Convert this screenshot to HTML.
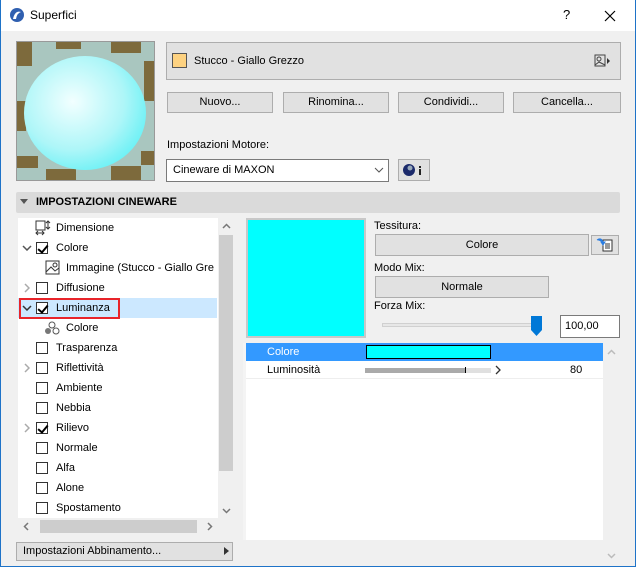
<!DOCTYPE html>
<html><head><meta charset="utf-8"><style>
*{box-sizing:border-box;margin:0;padding:0}
body{width:636px;height:567px;overflow:hidden;background:#f0f0f0;font-family:"Liberation Sans",sans-serif;font-size:11px;color:#000;position:relative}
.a{position:absolute}
.win{left:0;top:0;width:636px;height:567px;border:1px solid #1e73c8;border-top:none}
.title{left:1px;top:0;width:634px;height:31px;background:#fff}
.btn{position:absolute;background:#e1e1e1;border:1px solid #adadad;text-align:center;line-height:18px}
.cb{position:absolute;width:12px;height:12px;border:1px solid #333;background:#fff}
.row{position:absolute;left:0;height:20px;width:199px;line-height:20px}
.chk:after{content:"";position:absolute;left:3px;top:0px;width:4px;height:8px;border:solid #000;border-width:0 2px 2px 0;transform:rotate(40deg)}
</style></head><body>
<div class="a win"></div>
<div class="a title"></div>
<svg class="a" style="left:9px;top:7px" width="16" height="16"><circle cx="8" cy="8" r="7" fill="#2f5fb0"/><path d="M4 12 Q6 3 12 5 Q8 6 7 12Z" fill="#fff"/></svg>
<div class="a" style="left:30px;top:8px;font-size:12px">Superfici</div>
<div class="a" style="left:563px;top:7px;font-size:13px">?</div>
<svg class="a" style="left:604px;top:10px" width="12" height="12"><path d="M1 1L11 11M11 1L1 11" stroke="#000" stroke-width="1.2"/></svg>

<svg class="a" style="left:16px;top:41px" width="139" height="140">
<rect width="139" height="140" fill="#a9c6bf"/>
<g fill="#7d6a3c"><rect x="0" y="0" width="16" height="25"/><rect x="40" y="0" width="25" height="8"/><rect x="95" y="0" width="30" height="12"/><rect x="0" y="60" width="10" height="30"/><rect x="128" y="20" width="11" height="40"/><rect x="0" y="115" width="22" height="12"/><rect x="30" y="128" width="30" height="12"/><rect x="95" y="125" width="30" height="15"/><rect x="125" y="110" width="14" height="14"/></g>
<rect x="0.5" y="0.5" width="138" height="139" fill="none" stroke="#999"/>
<defs><radialGradient id="g" cx="0.4" cy="0.4" r="0.7"><stop offset="0" stop-color="#f2ffff"/><stop offset="0.6" stop-color="#aef6f8"/><stop offset="1" stop-color="#5ef0f5"/></radialGradient></defs>
<ellipse cx="69" cy="72" rx="61" ry="57" fill="url(#g)"/>
</svg>

<div class="btn" style="left:166px;top:42px;width:455px;height:38px;text-align:left"></div>
<div class="a" style="left:172px;top:53px;width:15px;height:15px;background:#fdd281;border:1px solid #555"></div>
<div class="a" style="left:194px;top:55px">Stucco - Giallo Grezzo</div>
<svg class="a" style="left:594px;top:54px" width="16" height="14"><rect x="1" y="1" width="10" height="11" fill="none" stroke="#444"/><circle cx="5" cy="5" r="2" fill="none" stroke="#444"/><path d="M1 11L5 8L11 11" fill="none" stroke="#444"/><path d="M13 4L16 7L13 10Z" fill="#333"/></svg>

<div class="btn" style="left:167px;top:92px;width:106px;height:21px">Nuovo...</div>
<div class="btn" style="left:283px;top:92px;width:106px;height:21px">Rinomina...</div>
<div class="btn" style="left:398px;top:92px;width:106px;height:21px">Condividi...</div>
<div class="btn" style="left:513px;top:92px;width:108px;height:21px">Cancella...</div>

<div class="a" style="left:167px;top:139px">Impostazioni Motore:</div>
<div class="a" style="left:166px;top:159px;width:223px;height:23px;background:#fff;border:1px solid #7a7a7a;line-height:21px;padding-left:6px">Cineware di MAXON</div>
<svg class="a" style="left:374px;top:167px" width="10" height="6"><path d="M1 1L5 5L9 1" fill="none" stroke="#555"/></svg>
<div class="btn" style="left:398px;top:159px;width:32px;height:22px"></div>
<svg class="a" style="left:402px;top:162px" width="24" height="16"><circle cx="7" cy="8" r="6" fill="#1b2a6b"/><circle cx="8" cy="6" r="2.5" fill="#9ab"/><rect x="17" y="7" width="2" height="6" fill="#222"/><rect x="17" y="4" width="2" height="2" fill="#222"/></svg>

<div class="a" style="left:16px;top:192px;width:604px;height:21px;background:#dadada;border-radius:2px"></div>
<svg class="a" style="left:20px;top:199px" width="8" height="6"><path d="M0 0H8L4 5Z" fill="#555"/></svg>
<div class="a" style="left:36px;top:196px;font-weight:bold">IMPOSTAZIONI CINEWARE</div>

<div class="a" style="left:18px;top:218px;width:200px;height:300px;background:#fff"></div>
<div class="a" style="left:218px;top:218px;width:16px;height:300px;background:#f0f0f0"></div>
<div class="a" style="left:219px;top:235px;width:14px;height:236px;background:#cdcdcd"></div>
<svg class="a" style="left:222px;top:223px" width="9" height="6"><path d="M1 5L4.5 1.5L8 5" fill="none" stroke="#777" stroke-width="1.5"/></svg>
<svg class="a" style="left:222px;top:508px" width="9" height="6"><path d="M1 1L4.5 4.5L8 1" fill="none" stroke="#777" stroke-width="1.5"/></svg>
<div class="a" style="left:18px;top:518px;width:216px;height:17px;background:#f0f0f0"></div>
<div class="a" style="left:40px;top:520px;width:157px;height:13px;background:#cdcdcd"></div>
<svg class="a" style="left:23px;top:522px" width="6" height="9"><path d="M5 1L1.5 4.5L5 8" fill="none" stroke="#777" stroke-width="1.5"/></svg>
<svg class="a" style="left:207px;top:522px" width="6" height="9"><path d="M1 1L4.5 4.5L1 8" fill="none" stroke="#777" stroke-width="1.5"/></svg>

<div class="a" style="left:18px;top:218px;width:200px;height:300px;overflow:hidden">
<div class="row" style="top:0"><svg class="a" style="left:17px;top:2px" width="16" height="16"><rect x="1" y="1" width="9" height="9" fill="none" stroke="#333"/><path d="M13 1V9M11 3L13 1L15 3M11 7L13 9L15 7M1 13H9M3 11L1 13L3 15M7 11L9 13L7 15" fill="none" stroke="#333"/></svg><span class="a" style="left:38px">Dimensione</span></div>
<div class="row" style="top:20px"><svg class="a" style="left:4px;top:7px" width="10" height="6"><path d="M1 1L5 5L9 1" fill="none" stroke="#555" stroke-width="1.5"/></svg><div class="cb chk" style="left:18px;top:4px"></div><span class="a" style="left:38px">Colore</span></div>
<div class="row" style="top:40px"><svg class="a" style="left:27px;top:2px" width="16" height="16"><rect x="1" y="1" width="13" height="13" fill="none" stroke="#333"/><path d="M1 12L6 7L10 11L14 8" fill="none" stroke="#333"/><circle cx="10" cy="5" r="2" fill="none" stroke="#333"/></svg><span class="a" style="left:48px;white-space:nowrap">Immagine (Stucco - Giallo Gre</span></div>
<div class="row" style="top:60px"><svg class="a" style="left:6px;top:5px" width="6" height="10"><path d="M1 1L5 5L1 9" fill="none" stroke="#aaa" stroke-width="1.5"/></svg><div class="cb" style="left:18px;top:4px"></div><span class="a" style="left:38px">Diffusione</span></div>
<div class="row" style="top:80px;background:#cce8ff"><svg class="a" style="left:4px;top:7px" width="10" height="6"><path d="M1 1L5 5L9 1" fill="none" stroke="#333" stroke-width="1.5"/></svg><div class="cb chk" style="left:18px;top:4px"></div><span class="a" style="left:38px">Luminanza</span><div class="a" style="left:1px;top:0;width:101px;height:21px;border:2px solid #e8242a"></div></div>
<div class="row" style="top:100px"><svg class="a" style="left:26px;top:2px" width="16" height="16"><circle cx="8" cy="5" r="3" fill="none" stroke="#555"/><circle cx="4" cy="11" r="3" fill="#777"/><circle cx="12" cy="11" r="3" fill="none" stroke="#555"/></svg><span class="a" style="left:48px">Colore</span></div>
<div class="row" style="top:120px"><div class="cb" style="left:18px;top:4px"></div><span class="a" style="left:38px">Trasparenza</span></div>
<div class="row" style="top:140px"><svg class="a" style="left:6px;top:5px" width="6" height="10"><path d="M1 1L5 5L1 9" fill="none" stroke="#aaa" stroke-width="1.5"/></svg><div class="cb" style="left:18px;top:4px"></div><span class="a" style="left:38px">Riflettività</span></div>
<div class="row" style="top:160px"><div class="cb" style="left:18px;top:4px"></div><span class="a" style="left:38px">Ambiente</span></div>
<div class="row" style="top:180px"><div class="cb" style="left:18px;top:4px"></div><span class="a" style="left:38px">Nebbia</span></div>
<div class="row" style="top:200px"><svg class="a" style="left:6px;top:5px" width="6" height="10"><path d="M1 1L5 5L1 9" fill="none" stroke="#aaa" stroke-width="1.5"/></svg><div class="cb chk" style="left:18px;top:4px"></div><span class="a" style="left:38px">Rilievo</span></div>
<div class="row" style="top:220px"><div class="cb" style="left:18px;top:4px"></div><span class="a" style="left:38px">Normale</span></div>
<div class="row" style="top:240px"><div class="cb" style="left:18px;top:4px"></div><span class="a" style="left:38px">Alfa</span></div>
<div class="row" style="top:260px"><div class="cb" style="left:18px;top:4px"></div><span class="a" style="left:38px">Alone</span></div>
<div class="row" style="top:280px"><div class="cb" style="left:18px;top:4px"></div><span class="a" style="left:38px">Spostamento</span></div>
</div>

<div class="btn" style="left:16px;top:542px;width:217px;height:19px;text-align:left;padding-left:6px;line-height:17px">Impostazioni Abbinamento...</div>
<svg class="a" style="left:224px;top:547px" width="5" height="8"><path d="M0 0L5 4L0 8Z" fill="#333"/></svg>

<div class="a" style="left:246px;top:218px;width:120px;height:120px;background:#00ffff;border:2px solid #c8c8c8"></div>
<div class="a" style="left:374px;top:220px">Tessitura:</div>
<div class="btn" style="left:375px;top:234px;width:214px;height:22px;line-height:20px">Colore</div>
<div class="btn" style="left:591px;top:235px;width:28px;height:20px"></div>
<svg class="a" style="left:596px;top:237px" width="18" height="16"><rect x="7" y="3" width="9" height="11" fill="#fff" stroke="#333"/><path d="M9 7H14M9 9H14M9 11H14" stroke="#333"/><path d="M1 3Q5 0 7 5L5 5L7 8L9 5L7 5" fill="#2a7de1" stroke="#2a7de1"/></svg>
<div class="a" style="left:374px;top:262px">Modo Mix:</div>
<div class="btn" style="left:375px;top:276px;width:174px;height:22px;line-height:20px">Normale</div>
<div class="a" style="left:374px;top:300px">Forza Mix:</div>
<div class="a" style="left:382px;top:323px;width:152px;height:4px;background:#e7e7e7;border:1px solid #d0d0d0"></div>
<svg class="a" style="left:531px;top:316px" width="11" height="20"><path d="M0 0H11V14L5.5 20L0 14Z" fill="#0078d7"/></svg>
<div class="a" style="left:560px;top:315px;width:60px;height:23px;background:#fff;border:1px solid #7a7a7a;line-height:21px;padding-left:4px">100,00</div>

<div class="a" style="left:246px;top:343px;width:357px;height:197px;background:#fff"></div>
<div class="a" style="left:243px;top:343px;width:3px;height:197px;background:#f4f4f4"></div>
<div class="a" style="left:246px;top:343px;width:357px;height:18px;background:#3399ff"></div>
<div class="a" style="left:267px;top:346px;color:#fff">Colore</div>
<div class="a" style="left:366px;top:345px;width:125px;height:14px;background:#00ffff;border:1px solid #000"></div>
<div class="a" style="left:246px;top:378px;width:357px;height:1px;background:#eee"></div>
<div class="a" style="left:267px;top:364px">Luminosità</div>
<div class="a" style="left:365px;top:368px;width:126px;height:5px;background:#e0e0e0"></div>
<div class="a" style="left:365px;top:368px;width:100px;height:5px;background:#aaa"></div>
<div class="a" style="left:465px;top:367px;width:1px;height:6px;background:#000"></div>
<svg class="a" style="left:495px;top:365px" width="7" height="10"><path d="M1 1L5 5L1 9" fill="none" stroke="#333" stroke-width="1.3"/></svg>
<div class="a" style="left:570px;top:364px">80</div>
<svg class="a" style="left:607px;top:349px" width="9" height="6"><path d="M1 5L4.5 1.5L8 5" fill="none" stroke="#bbb" stroke-width="1.5"/></svg>
<svg class="a" style="left:607px;top:553px" width="9" height="6"><path d="M1 1L4.5 4.5L8 1" fill="none" stroke="#bbb" stroke-width="1.5"/></svg>
</body></html>
